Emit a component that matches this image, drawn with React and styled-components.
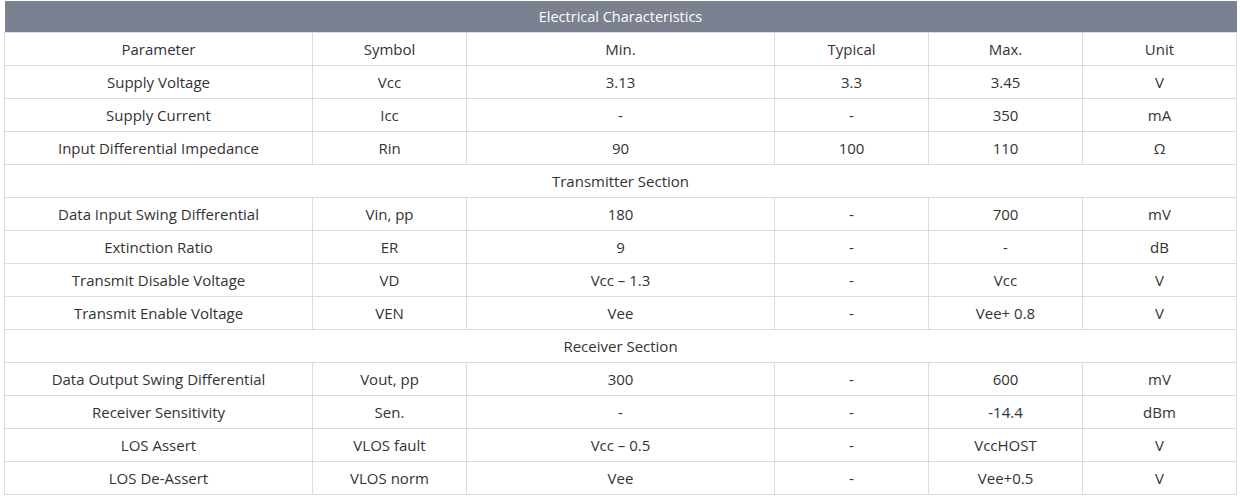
import * as React from 'react';
import styled, { createGlobalStyle } from 'styled-components';

const GlobalStyle = createGlobalStyle`
	html, body {
		margin: 0;
		padding: 0;
		background: #ffffff;
	}
	body {
		font-family: 'Open Sans', 'Noto Sans', sans-serif;
	}
`;

const Wrapper = styled.div`
	padding: 1px 4px 0 4px;
	width: 1232px;
`;

const Table = styled.table`
	width: 1232px;
	border-collapse: collapse;
	table-layout: fixed;
	font-size: 15px;
	color: #333333;
`;

const Caption = styled.th`
	background-color: #7b8191;
	color: #ffffff;
	font-weight: 400;
	font-size: 14.5px;
	height: 31px;
	padding: 0;
	border: none;
`;

const Cell = styled.td`
	height: 32px;
	padding: 0;
	text-align: center;
	border: 1px solid #dcdcdc;
	white-space: nowrap;
`;

const columns = [308, 154, 308, 154, 154, 154];

const rows = [
	['Parameter', 'Symbol', 'Min.', 'Typical', 'Max.', 'Unit'],
	['Supply Voltage', 'Vcc', '3.13', '3.3', '3.45', 'V'],
	['Supply Current', 'Icc', '-', '-', '350', 'mA'],
	['Input Differential Impedance', 'Rin', '90', '100', '110', 'Ω'],
	'Transmitter Section',
	['Data Input Swing Differential', 'Vin, pp', '180', '-', '700', 'mV'],
	['Extinction Ratio', 'ER', '9', '-', '-', 'dB'],
	['Transmit Disable Voltage', 'VD', 'Vcc – 1.3', '-', 'Vcc', 'V'],
	['Transmit Enable Voltage', 'VEN', 'Vee', '-', 'Vee+ 0.8', 'V'],
	'Receiver Section',
	['Data Output Swing Differential', 'Vout, pp', '300', '-', '600', 'mV'],
	['Receiver Sensitivity', 'Sen.', '-', '-', '-14.4', 'dBm'],
	['LOS Assert', 'VLOS fault', 'Vcc – 0.5', '-', 'VccHOST', 'V'],
	['LOS De-Assert', 'VLOS norm', 'Vee', '-', 'Vee+0.5', 'V'],
];

export default function App() {
	return (
		<Wrapper>
			<GlobalStyle />
			<Table>
				<colgroup>
					{columns.map((w, i) => (
						<col key={i} style={{ width: w }} />
					))}
				</colgroup>
				<thead>
					<tr>
						<Caption colSpan={6}>Electrical Characteristics</Caption>
					</tr>
				</thead>
				<tbody>
					{rows.map((row, i) =>
						typeof row === 'string' ? (
							<tr key={i}>
								<Cell colSpan={6}>{row}</Cell>
							</tr>
						) : (
							<tr key={i}>
								{row.map((value, j) => (
									<Cell key={j}>{value}</Cell>
								))}
							</tr>
						)
					)}
				</tbody>
			</Table>
		</Wrapper>
	);
}
